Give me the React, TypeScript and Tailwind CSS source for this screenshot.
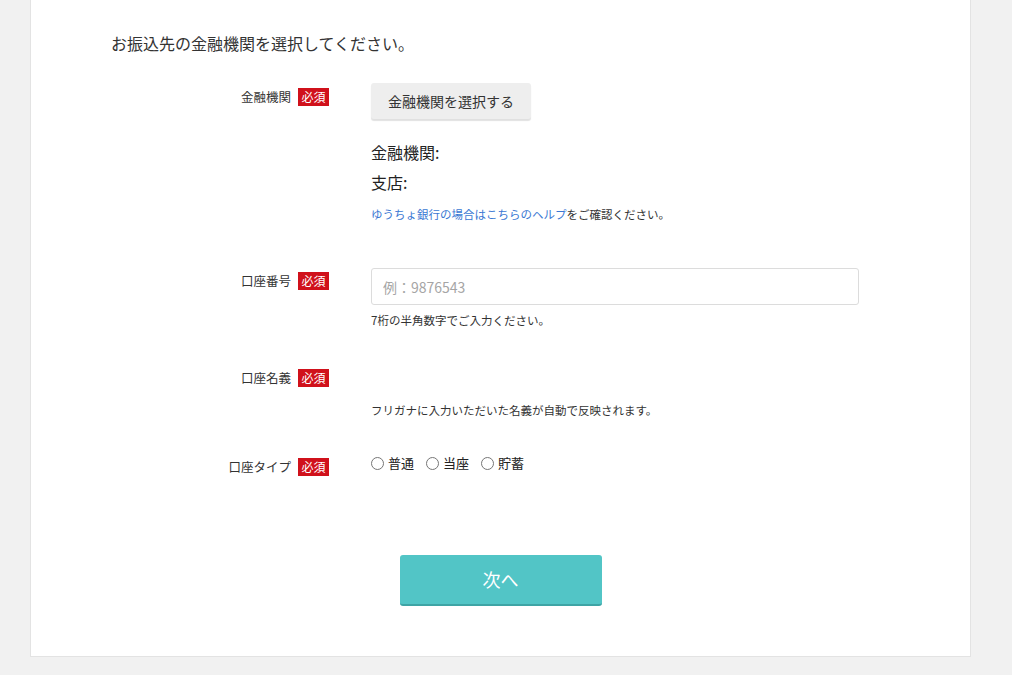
import React from 'react';

function Badge() {
  return (
    <span className="ml-[7px] inline-flex h-[18px] w-[31px] items-center justify-center bg-[#d0111b] text-[12px] leading-none text-white">
      必須
    </span>
  );
}

function Label({ text, className = '' }: { text: string; className?: string }) {
  return (
    <div className={`flex h-[18px] w-[218px] shrink-0 items-center justify-end ${className}`}>
      <span className="text-[12.5px] leading-[18px] text-[#333]">{text}</span>
      <Badge />
    </div>
  );
}

function Radio({ label }: { label: string }) {
  return (
    <label className="flex items-center gap-[4px]">
      <span className="h-[13px] w-[13px] rounded-full border border-[#767676] bg-white" />
      <span className="text-[13px] leading-[18px] text-[#222]">{label}</span>
    </label>
  );
}

export default function App() {
  return (
    <div
      className="min-h-[675px] w-full bg-[#f1f1f1] pl-[30px] pr-[41px]"
      style={{ fontFamily: '"Noto Sans CJK JP", "Noto Sans", sans-serif' }}
    >
      <div className="border-x border-b border-[#e3e3e3] bg-white pb-[50px] pl-[80px] pt-[31px]">
        <p className="text-[16px] leading-[24px] text-[#333]">お振込先の金融機関を選択してください。</p>

        {/* 金融機関 */}
        <div className="mt-[28px] flex items-start">
          <Label text="金融機関" className="mt-[5px]" />
          <div className="ml-[42px] flex flex-col items-start">
            <button className="h-[36px] rounded-[3px] bg-[#eeeeee] px-[17px] text-[14px] text-[#333] shadow-[0_2px_1px_rgba(0,0,0,0.12)]">
              金融機関を選択する
            </button>
            <p className="mt-[18px] text-[16px] leading-[30px] text-[#222]">金融機関:</p>
            <p className="text-[16px] leading-[30px] text-[#222]">支店:</p>
            <p className="mt-[8px] text-[11.5px] leading-[18px] text-[#333]">
              <a href="#" className="text-[#3a78d3]">ゆうちょ銀行の場合はこちらのヘルプ</a>
              をご確認ください。
            </p>
          </div>
        </div>

        {/* 口座番号 */}
        <div className="mt-[45px] flex items-start">
          <Label text="口座番号" className="mt-[4px]" />
          <div className="ml-[42px] flex flex-col">
            <input
              type="text"
              placeholder="例：9876543"
              className="h-[37px] w-[488px] rounded-[3px] border border-[#dcdcdc] px-[11px] text-[14px] text-[#333] outline-none placeholder:text-[#a5a5a5]"
            />
            <p className="mt-[6px] text-[11.5px] leading-[18px] text-[#333]">7桁の半角数字でご入力ください。</p>
          </div>
        </div>

        {/* 口座名義 */}
        <div className="mt-[40px] flex items-start">
          <Label text="口座名義" />
          <div className="ml-[42px] pt-[32px]">
            <p className="text-[11.5px] leading-[18px] text-[#333]">フリガナに入力いただいた名義が自動で反映されます。</p>
          </div>
        </div>

        {/* 口座タイプ */}
        <div className="mt-[35px] flex items-start">
          <Label text="口座タイプ" className="mt-[4px]" />
          <div className="ml-[42px] flex items-center gap-[12px]">
            <Radio label="普通" />
            <Radio label="当座" />
            <Radio label="貯蓄" />
          </div>
        </div>

        <div className="mt-[79px] flex justify-center pr-[80px]">
          <button className="h-[51px] w-[202px] rounded-[3px] border-b-2 border-[#3ea4a5] bg-[#52c5c6] text-[18px] text-white">
            次へ
          </button>
        </div>
      </div>
    </div>
  );
}
